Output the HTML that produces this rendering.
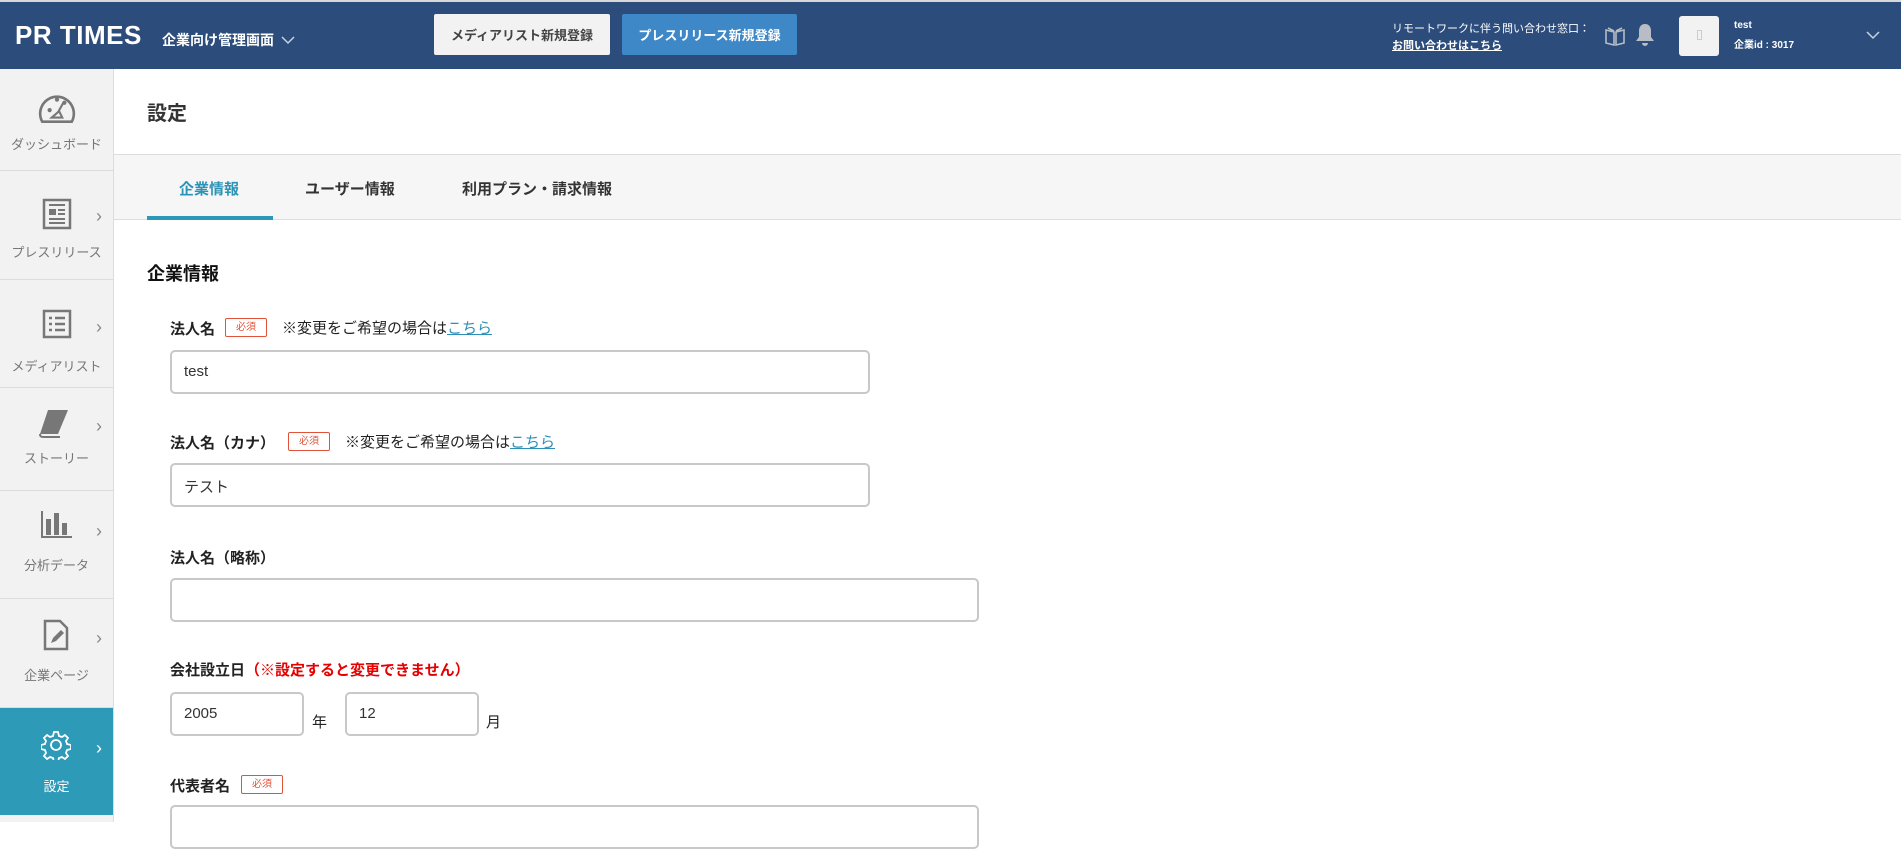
<!DOCTYPE html>
<html><head><meta charset="utf-8"><style>
*{box-sizing:border-box;margin:0;padding:0}
body{width:1901px;height:822px;overflow:hidden;background:#fff;font-family:"Liberation Sans","Noto Sans CJK JP",sans-serif;color:#222;position:relative}
.a{position:absolute;white-space:nowrap}
#hd{position:absolute;left:0;top:0;width:1901px;height:69px;background:#2c4c7b;border-top:2px solid #d8d8d8}
.btn{position:absolute;top:12px;height:41px;border-radius:2px;font-size:13px;font-weight:bold;display:flex;align-items:center;justify-content:center}
#sb{position:absolute;left:0;top:69px;width:114px;height:753px;background:#f2f2f2;border-right:1px solid #dcdcdc}
.it{position:absolute;left:0;width:113px;border-bottom:1px solid #dcdcdc;color:#777;font-size:13px;text-align:center}
.it .lb{position:absolute;left:0;width:113px;text-align:center}
.it .ch{position:absolute;left:96px;color:#888;font-size:18px}
.lab{position:absolute;font-size:15px;font-weight:bold;color:#222}
.bd{position:absolute;border:1px solid #e0533a;color:#e0533a;font-size:10px;border-radius:2px;width:42px;height:19px;text-align:center;line-height:17px;font-weight:normal}
.note{position:absolute;font-size:15px;color:#222}
.note u{color:#2b8fb8}
.inp{position:absolute;border:2px solid #c8c8c8;border-radius:5px;height:44px;font-size:15px;color:#333;padding:11px 0 0 12px}
</style></head><body>
<div id="hd">
 <div class="a" style="left:15px;top:18px;color:#fff;font-size:26px;font-weight:bold;letter-spacing:0.5px">PR TIMES</div>
 <div class="a" style="left:162px;top:28px;color:#fff;font-size:14px;font-weight:bold">企業向け管理画面</div>
 <svg class="a" style="left:281px;top:34px" width="14" height="9"><path d="M1 1l6 6 6-6" stroke="#c9d3e0" stroke-width="1.5" fill="none"/></svg>
 <div class="btn" style="left:434px;width:176px;background:#f2f2f2;color:#444">メディアリスト新規登録</div>
 <div class="btn" style="left:622px;width:175px;background:#3e88c8;color:#fff">プレスリリース新規登録</div>
 <div class="a" style="left:1392px;top:18px;color:#fff;font-size:11px">リモートワークに伴う問い合わせ窓口：</div>
 <div class="a" style="left:1392px;top:35px;color:#fff;font-size:11px;font-weight:bold;text-decoration:underline">お問い合わせはこちら</div>
 <svg class="a" style="left:1604px;top:23px" width="22" height="22" viewBox="0 0 22 22"><path d="M2 5l8 2v13l-8-2zM20 5l-8 2v13l8-2zM4 3l6 3M18 3l-6 3" stroke="#b5bcc6" stroke-width="1.6" fill="none"/></svg>
 <svg class="a" style="left:1634px;top:20px" width="22" height="26" viewBox="0 0 22 26"><path d="M11 2c-4 0-6 3-6 7v6l-3 4h18l-3-4V9c0-4-2-7-6-7zM8 21a3 3 0 006 0z" fill="#b8bcc4"/></svg>
 <div class="a" style="left:1679px;top:14px;width:40px;height:40px;background:#f2f2f2;border-radius:3px"></div>
 <div class="a" style="left:1697px;top:28px;width:5px;height:10px;border:1px solid #ccc"></div>
 <div class="a" style="left:1734px;top:18px;color:#fff;font-size:10px;font-weight:bold">test</div>
 <div class="a" style="left:1734px;top:34px;color:#fff;font-size:10px;font-weight:bold">企業id : 3017</div>
 <svg class="a" style="left:1866px;top:29px" width="14" height="9"><path d="M1 1l6 6 6-6" stroke="#c9d3e0" stroke-width="1.5" fill="none"/></svg>
</div>
<div id="sb">
 <div class="it" style="top:0;height:102px">
  <svg class="a" style="left:37px;top:20px" width="40" height="36" viewBox="0 0 38 34"><path d="M5 31a16 16 0 1128 0z" stroke="#777" stroke-width="2.5" fill="none"/><circle cx="12" cy="20" r="2" fill="#777"/><circle cx="26" cy="13" r="2" fill="#777"/><circle cx="19" cy="10" r="2" fill="#777"/><path d="M14 27h10l-3-6zM20 22l5-9" stroke="#777" stroke-width="2" fill="none"/></svg>
  <div class="lb" style="top:65px">ダッシュボード</div></div>
 <div class="it" style="top:102px;height:109px">
  <svg class="a" style="left:42px;top:27px" width="30" height="32"><rect x="2" y="2" width="26" height="28" stroke="#777" stroke-width="2.5" fill="none"/><rect x="7" y="11" width="7" height="6" fill="#777"/><path d="M7 7h16M16 12h7M16 16h7M7 21h16M7 25h16" stroke="#777" stroke-width="2"/></svg>
  <div class="ch" style="top:35px">›</div><div class="lb" style="top:71px">プレスリリース</div></div>
 <div class="it" style="top:211px;height:108px">
  <svg class="a" style="left:42px;top:29px" width="30" height="30"><rect x="2" y="2" width="26" height="26" stroke="#777" stroke-width="2.5" fill="none"/><path d="M7 9h3M13 9h10M7 15h3M13 15h10M7 21h3M13 21h10" stroke="#777" stroke-width="2.5"/></svg>
  <div class="ch" style="top:37px">›</div><div class="lb" style="top:76px">メディアリスト</div></div>
 <div class="it" style="top:319px;height:103px">
  <svg class="a" style="left:38px;top:19px" width="34" height="32" viewBox="0 0 34 30"><path d="M10 2h20l-10 24H2z" fill="#777"/><path d="M2 26c0 3 2 3 4 3h16" stroke="#777" stroke-width="2" fill="none"/></svg>
  <div class="ch" style="top:28px">›</div><div class="lb" style="top:60px">ストーリー</div></div>
 <div class="it" style="top:422px;height:108px">
  <svg class="a" style="left:40px;top:20px" width="32" height="28"><path d="M2 0v26h30" stroke="#777" stroke-width="2" fill="none"/><rect x="6" y="8" width="5" height="16" fill="#777"/><rect x="14" y="2" width="5" height="22" fill="#777"/><rect x="22" y="12" width="5" height="12" fill="#777"/></svg>
  <div class="ch" style="top:30px">›</div><div class="lb" style="top:64px">分析データ</div></div>
 <div class="it" style="top:530px;height:109px">
  <svg class="a" style="left:43px;top:20px" width="26" height="32"><path d="M2 2h15l7 7v21H2z" stroke="#777" stroke-width="2.5" fill="none"/><path d="M8 24l2-5 8-8 3 3-8 8z" fill="#777"/></svg>
  <div class="ch" style="top:29px">›</div><div class="lb" style="top:66px">企業ページ</div></div>
 <div class="it" style="top:639px;height:107px;background:#2d9ab7;color:#fff;border:none">
  <svg class="a" style="left:41px;top:22px" width="30" height="30" viewBox="0 0 30 30"><path d="M13 2h4l1 4 3 1 3-2 3 3-2 3 1 3 4 1v4l-4 1-1 3 2 3-3 3-3-2-3 1-1 4h-4l-1-4-3-1-3 2-3-3 2-3-1-3-4-1v-4l4-1 1-3-2-3 3-3 3 2 3-1z" stroke="#fff" stroke-width="1.8" fill="none"/><circle cx="15" cy="15" r="5" stroke="#fff" stroke-width="1.8" fill="none"/></svg>
  <div class="ch" style="top:30px;color:#fff">›</div><div class="lb" style="top:68px;color:#fff">設定</div></div>
</div>
<div class="a" style="left:114px;top:154px;width:1787px;height:1px;background:#ddd"></div>
<div class="a" style="left:147px;top:97px;font-size:20px;font-weight:bold;color:#333">設定</div>
<div class="a" style="left:114px;top:155px;width:1787px;height:65px;background:#f6f6f6;border-bottom:1px solid #ddd"></div>
<div class="a" style="left:179px;top:178px;font-size:15px;font-weight:bold;color:#2b93b6">企業情報</div>
<div class="a" style="left:147px;top:216px;width:126px;height:4px;background:#2b9ab8"></div>
<div class="a" style="left:305px;top:178px;font-size:15px;font-weight:bold;color:#333">ユーザー情報</div>
<div class="a" style="left:462px;top:178px;font-size:15px;font-weight:bold;color:#333">利用プラン・請求情報</div>
<div class="a" style="left:147px;top:260px;font-size:18px;font-weight:bold;color:#111">企業情報</div>

<div class="lab" style="left:170px;top:318px">法人名</div>
<div class="bd" style="left:225px;top:318px">必須</div>
<div class="note" style="left:282px;top:317px">※変更をご希望の場合は<u>こちら</u></div>
<div class="inp" style="left:170px;top:350px;width:700px">test</div>

<div class="lab" style="left:170px;top:432px">法人名（カナ）</div>
<div class="bd" style="left:288px;top:432px">必須</div>
<div class="note" style="left:345px;top:431px">※変更をご希望の場合は<u>こちら</u></div>
<div class="inp" style="left:170px;top:463px;width:700px">テスト</div>

<div class="lab" style="left:170px;top:547px">法人名（略称）</div>
<div class="inp" style="left:170px;top:578px;width:809px"></div>

<div class="lab" style="left:170px;top:659px">会社設立日<span style="color:#e60000">（※設定すると変更できません）</span></div>
<div class="inp" style="left:170px;top:692px;width:134px">2005</div>
<div class="a" style="left:312px;top:711px;font-size:15px">年</div>
<div class="inp" style="left:345px;top:692px;width:134px">12</div>
<div class="a" style="left:486px;top:711px;font-size:15px">月</div>

<div class="lab" style="left:170px;top:775px">代表者名</div>
<div class="bd" style="left:241px;top:775px">必須</div>
<div class="inp" style="left:170px;top:805px;width:809px"></div>
</body></html>
